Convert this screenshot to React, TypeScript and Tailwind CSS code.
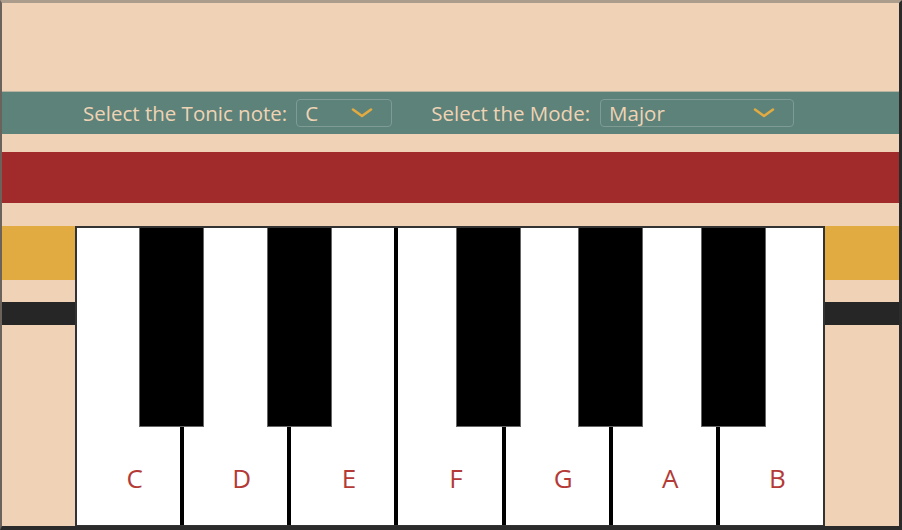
import React from "react";

const whiteKeys = ["C", "D", "E", "F", "G", "A", "B"];
const blackKeyLefts = [62, 190, 379, 501, 624];

function Chevron({ className }: { className?: string }) {
  return (
    <svg className={className} width="22" height="10" viewBox="0 0 22 10" fill="none">
      <path d="M2 1.5 L11 8 L20 1.5" stroke="#e1ab42" strokeWidth="2.6" strokeLinecap="round" strokeLinejoin="round" />
    </svg>
  );
}

function Select({ value, width }: { value: string; width: string }) {
  return (
    <div
      className={`${width} h-[28px] flex items-center justify-between pl-[8px] pr-[18px] border border-[#7e9c93] rounded-[4px] text-[#efd3b5]`}
    >
      <span>{value}</span>
      <Chevron />
    </div>
  );
}

export default function App() {
  return (
    <div
      className="w-[902px] h-[530px] bg-[#f0d2b6] border-t-[3px] border-t-[#ac9c8c] border-l-2 border-l-[#6b625c] border-r-[3px] border-r-[#2b2b2b] border-b-4 border-b-[#2b2b2b] flex flex-col overflow-hidden"
      style={{ fontFamily: '"Open Sans", "Liberation Sans", sans-serif' }}
    >
      <div className="h-[88px] shrink-0" />
      <div className="h-[43px] shrink-0 bg-[#5c8279] border-t border-t-[#b8b3a0] flex items-center pl-[81px] text-[20.5px] text-[#efd3b5]">
        <span className="mr-[9px]">Select the Tonic note:</span>
        <Select value="C" width="w-[96px]" />
        <span className="ml-[39px] mr-[10px]">Select the Mode:</span>
        <Select value="Major" width="w-[194px]" />
      </div>
      <div className="h-[18px] shrink-0" />
      <div className="h-[51px] shrink-0 bg-[#a02b2a]" />
      <div className="h-[23px] shrink-0" />
      <div className="relative flex-1">
        <div className="h-[54px] bg-[#e1ab42]" />
        <div className="h-[22px]" />
        <div className="h-[23px] bg-[#262626]" />
        <div className="absolute left-[73px] top-0 w-[750px] h-[301px] border-2 border-[#333333] bg-black">
          <div className="flex h-full gap-[4px]">
            {whiteKeys.map((k) => (
              <div key={k} className="flex-1 bg-white flex flex-col justify-end items-center pl-[12px] pb-[32px]">
                <span className="text-[26px] leading-[30px] text-[#b33a36]">{k}</span>
              </div>
            ))}
          </div>
          {blackKeyLefts.map((l) => (
            <div
              key={l}
              className="absolute top-0 w-[65px] h-[199px] bg-black border border-[#666666] border-t-0"
              style={{ left: l }}
            />
          ))}
        </div>
      </div>
    </div>
  );
}
